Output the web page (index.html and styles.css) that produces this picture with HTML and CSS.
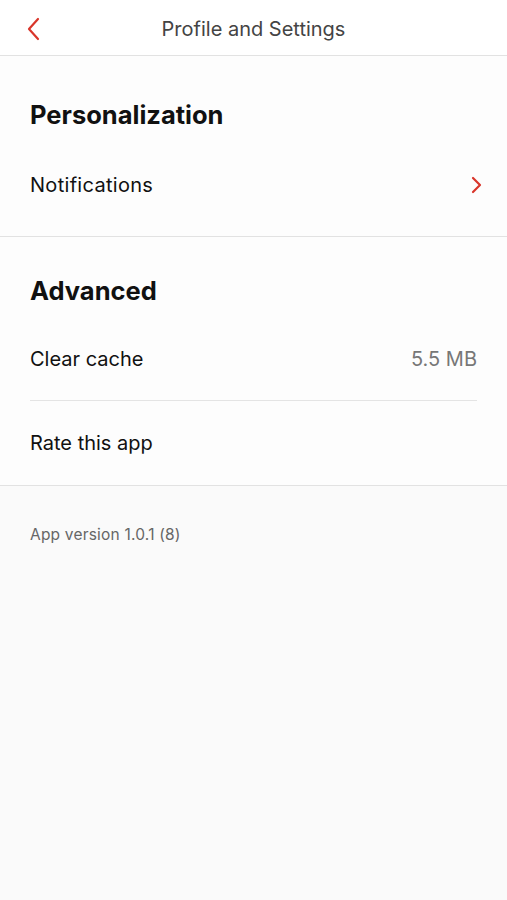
FILE: index.html
```html
<!DOCTYPE html>
<html lang="en">
<head>
    <meta charset="UTF-8">
    <meta name="viewport" content="width=device-width, initial-scale=1.0">
    <title>Profile and Settings</title>
    <link rel="stylesheet" href="styles.css">
</head>
<body>
    <header class="topbar">
        <a class="back" href="#">
            <svg width="14" height="24" viewBox="0 0 14 24"><path d="M12 2 L3 12 L12 22" fill="none" stroke="#d9362b" stroke-width="2.2" stroke-linecap="round" stroke-linejoin="round"/></svg>
        </a>
        <div class="title">Profile and Settings</div>
    </header>

    <section class="section first">
        <h2>Personalization</h2>
        <div class="row">
            <span>Notifications</span>
            <svg class="chev" width="12" height="18" viewBox="0 0 12 18"><path d="M3 2 L10 9 L3 16" fill="none" stroke="#d9362b" stroke-width="2.2" stroke-linecap="round" stroke-linejoin="round"/></svg>
        </div>
    </section>

    <section class="section">
        <h2>Advanced</h2>
        <div class="row divided">
            <span>Clear cache</span>
            <span class="value">5.5 MB</span>
        </div>
        <div class="row last">
            <span>Rate this app</span>
        </div>
    </section>

    <p class="version">App version 1.0.1 (8)</p>
</body>
</html>
```

FILE: styles.css
```css
body {
    margin: 0;
    font-family: Inter, "Open Sans", sans-serif;
    font-variant-ligatures: none;
    background-color: #fafafa;
    color: #111;
}
.topbar {
    position: relative;
    height: 55px;
    background-color: #fff;
    border-bottom: 1px solid #e2e2e2;
    display: flex;
    align-items: center;
    justify-content: center;
}
.back {
    position: absolute;
    left: 26px;
    top: 17px;
    display: flex;
}
.title {
    font-size: 20px;
    color: #444;
    padding-top: 2px;
}
.section {
    padding: 0 30px;
    border-bottom: 1px solid #e2e2e2;
    background-color: #fdfdfd;
}
.section h2 {
    margin: 0;
    font-size: 25.5px;
    font-weight: 700;
    line-height: 30px;
    padding-top: 39px;
    padding-bottom: 12px;
}
.section.first h2 {
    padding-top: 44px;
    padding-bottom: 0;
}
.row {
    display: flex;
    align-items: center;
    justify-content: space-between;
    font-size: 20px;
    height: 82px;
}
.first .row {
    height: 80px;
    padding-top: 15px;
    padding-bottom: 11px;
    letter-spacing: 0.3px;
}
.row.last {
    height: 84px;
}
.divided {
    border-bottom: 1px solid #e4e4e4;
}
.value {
    color: #777;
}
.chev {
    margin-right: -5px;
}
.version {
    margin: 0;
    padding: 39px 30px 0;
    font-size: 15.5px;
    letter-spacing: 0.2px;
    color: #666;
}
```
